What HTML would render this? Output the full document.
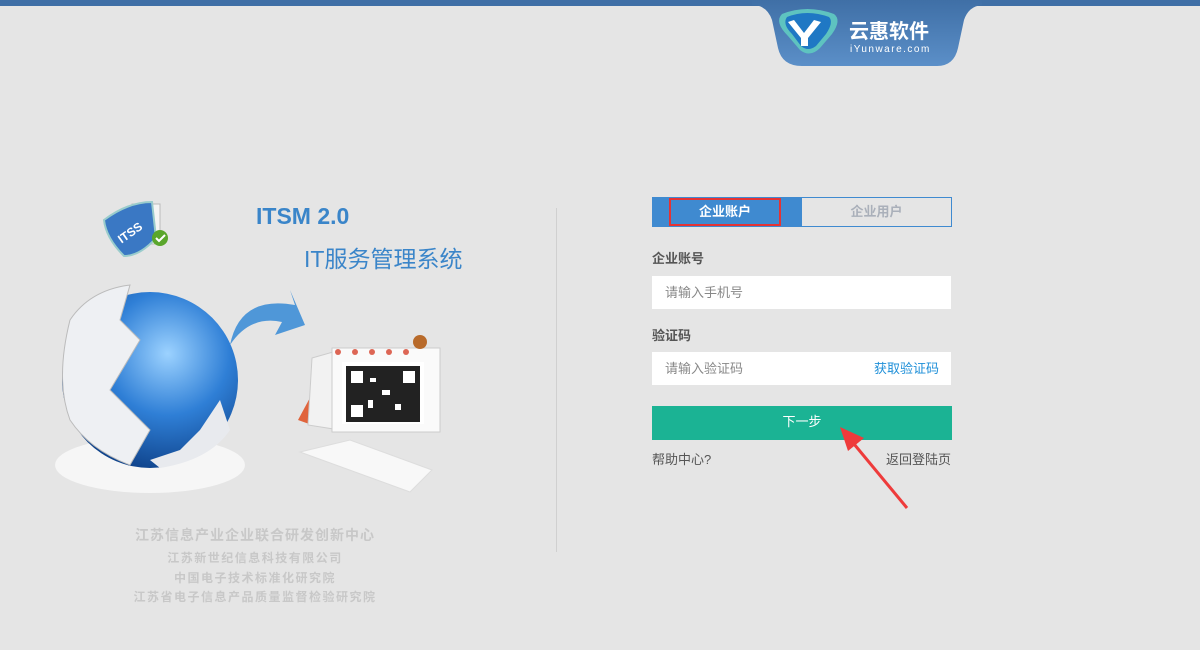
<!DOCTYPE html>
<html><head><meta charset="utf-8"><style>
*{margin:0;padding:0;box-sizing:border-box}
body{width:1200px;height:650px;background:#e5e5e5;position:relative;overflow:hidden;font-family:"Liberation Sans","Noto Sans CJK SC",sans-serif}
.a{position:absolute}
.topbar{left:0;top:0;width:1200px;height:6px;background:#3f6fa6}
.lbl{font-size:13px;color:#555;font-weight:bold}
.inp{background:#fff;left:652px;width:299px;height:33px;font-size:13px;color:#888;padding-left:13px;line-height:33px}
.ft{color:#c8c8c8;font-weight:bold;text-align:center;width:400px;left:55px}
</style></head><body>
<div class="a topbar"></div>
<svg class="a" style="left:752px;top:0" width="230" height="70">
<defs><linearGradient id="g" x1="0" y1="0" x2="0" y2="1"><stop offset="0" stop-color="#3f6fa6"/><stop offset="1" stop-color="#5b8fc8"/></linearGradient></defs>
<path d="M0 5 Q15 5 20 20 L26 48 Q30 66 50 66 L185 66 Q202 66 206 48 L212 20 Q217 5 232 5 L232 0 L0 0Z" fill="url(#g)"/>
<path d="M30 14 Q55 4 82 14 Q90 20 80 34 L68 48 Q58 58 48 50 L36 36 Q22 22 30 14Z" fill="#5ec3c0"/>
<path d="M35 17 Q55 9 77 17 Q82 22 74 34 L64 46 Q56 52 49 46 L40 34 Q30 24 35 17Z" fill="#1f78c4"/>
<path d="M42 20 L52 33 L62 20 L69 22 L56 38 L56 46 L49 46 L49 38 L36 22Z" fill="#fff"/>
<text x="97" y="38" fill="#fff" font-size="20" font-weight="bold" font-family="Noto Sans CJK SC,sans-serif">云惠软件</text>
<text x="98" y="52" fill="#fff" font-size="10" letter-spacing="1.5" font-family="Liberation Sans,sans-serif">iYunware.com</text>
</svg>

<svg class="a" style="left:100px;top:198px" width="72" height="60">
<rect x="32" y="6" width="28" height="40" fill="#f4f4f4" stroke="#bbb"/>
<path d="M4 22 Q28 4 52 4 L56 40 Q40 58 24 58 Q6 40 4 22Z" fill="#3a78c4" stroke="#9cc" stroke-width="2"/>
<text x="14" y="38" fill="#fff" font-size="12" font-weight="bold" transform="rotate(-35 30 30)">ITSS</text>
<circle cx="60" cy="40" r="8" fill="#5aa62c"/><path d="M56 40 l3 3 l6-6" stroke="#fff" stroke-width="2" fill="none"/>
</svg>
<div class="a" style="left:256px;top:203px;font-size:23px;font-weight:bold;color:#3a85c9">ITSM 2.0</div>
<div class="a" style="left:304px;top:240px;font-size:23px;color:#3a85c9">IT服务管理系统</div>

<svg class="a" style="left:50px;top:280px" width="420" height="220">
<defs><radialGradient id="gl" cx="0.6" cy="0.35" r="0.7"><stop offset="0" stop-color="#9cd2ff"/><stop offset="0.5" stop-color="#2f7fd6"/><stop offset="1" stop-color="#0d3f86"/></radialGradient></defs>
<ellipse cx="100" cy="185" rx="95" ry="28" fill="#f6f6f6"/>
<circle cx="100" cy="100" r="88" fill="url(#gl)"/>
<path d="M20 40 Q40 10 80 5 L70 40 L90 60 L60 110 L100 150 L80 185 Q40 170 20 140 Q5 100 20 40Z" fill="#eef0f3" stroke="#bbb"/>
<path d="M100 180 L130 170 L150 150 L170 120 L180 150 Q160 180 110 188Z" fill="#e8eaee"/>
<path d="M180 65 Q190 15 245 25 L240 10 L255 45 L225 55 L232 42 Q200 35 180 65Z" fill="#4f97d8"/>
<path d="M250 172 L360 212 L382 190 L300 160Z" fill="#f8f8f8" stroke="#ddd"/>
<path d="M283 75 L248 140 L262 145Z" fill="#e0643c"/>
<path d="M262 78 L290 70 L290 150 L258 145Z" fill="#f2f2f2" stroke="#ccc"/>
<rect x="282" y="68" width="108" height="84" fill="#fafafa" stroke="#ccc"/>
<rect x="292" y="82" width="82" height="62" fill="#fff"/>
<rect x="296" y="86" width="74" height="56" fill="#222"/>
<rect x="301" y="91" width="12" height="12" fill="#fff"/><rect x="353" y="91" width="12" height="12" fill="#fff"/><rect x="301" y="125" width="12" height="12" fill="#fff"/>
<rect x="320" y="98" width="6" height="4" fill="#fff"/><rect x="332" y="110" width="8" height="5" fill="#fff"/><rect x="318" y="120" width="5" height="8" fill="#fff"/><rect x="345" y="124" width="6" height="6" fill="#fff"/>
<g fill="#d65" ><circle cx="288" cy="72" r="3"/><circle cx="305" cy="72" r="3"/><circle cx="322" cy="72" r="3"/><circle cx="339" cy="72" r="3"/><circle cx="356" cy="72" r="3"/></g>
<circle cx="370" cy="62" r="7" fill="#b86a2a"/>
</svg>

<div class="a" style="left:556px;top:208px;width:1px;height:344px;background:#d0d0d0"></div>

<div class="a ft" style="top:525px;font-size:14px;letter-spacing:1px">江苏信息产业企业联合研发创新中心</div>
<div class="a ft" style="top:549px;font-size:12px;letter-spacing:1.5px">江苏新世纪信息科技有限公司</div>
<div class="a ft" style="top:569px;font-size:12px;letter-spacing:1.5px">中国电子技术标准化研究院</div>
<div class="a ft" style="top:588px;font-size:12px;letter-spacing:1.5px">江苏省电子信息产品质量监督检验研究院</div>

<div class="a" style="left:652px;top:197px;width:300px;height:30px;border:1px solid #3f8ad0"></div>
<div class="a" style="left:652px;top:197px;width:150px;height:30px;background:#3f8ad0"></div>
<div class="a" style="left:669px;top:198px;width:112px;height:28px;border:2px solid #e53333;color:#fff;font-size:13px;font-weight:bold;text-align:center;line-height:24px">企业账户</div>
<div class="a" style="left:802px;top:197px;width:149px;height:30px;color:#aab0ba;font-size:13px;font-weight:bold;text-align:center;line-height:30px">企业用户</div>
<div class="a lbl" style="left:652px;top:248px">企业账号</div>
<div class="a inp" style="top:276px">请输入手机号</div>
<div class="a lbl" style="left:652px;top:325px">验证码</div>
<div class="a inp" style="top:352px">请输入验证码<span style="position:absolute;right:12px;color:#1e8fd8">获取验证码</span></div>
<div class="a" style="left:652px;top:406px;width:300px;height:34px;background:#1bb394;color:#fff;font-size:13px;text-align:center;line-height:32px">下一步</div>
<div class="a" style="left:652px;top:449px;font-size:13px;color:#555">帮助中心?</div>
<div class="a" style="left:886px;top:449px;font-size:13px;color:#555">返回登陆页</div>
<svg class="a" style="left:830px;top:420px" width="90" height="100">
<path d="M77 88 L24 24" stroke="#ee3b3b" stroke-width="3"/>
<path d="M10 7 L34 18 L18 31Z" fill="#ee3b3b"/>
</svg>
</body></html>
